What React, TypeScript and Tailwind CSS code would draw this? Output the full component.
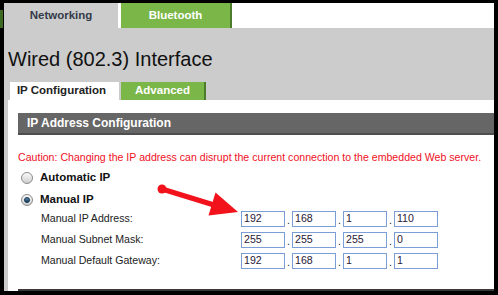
const font = "font-['Liberation_Sans',Arial,sans-serif]";

function Radio({ checked }: { checked?: boolean }) {
  return (
    <span className="flex h-[12px] w-[12px] items-center justify-center rounded-full border border-[#8a8a8a] bg-linear-to-b from-[#fafafa] to-[#cfcfcf]">
      {checked && (
        <span className="h-[6px] w-[6px] rounded-full border border-[#0f2f4a] bg-linear-to-b from-[#5d8fb8] to-[#173c5c]" />
      )}
    </span>
  );
}

function IpRow({ label, parts }: { label: string; parts: string[] }) {
  return (
    <div className="flex h-[21px] items-center">
      <div className="w-[223px] pl-[23px] text-[10.6px] text-[#222]">{label}</div>
      <div className="flex items-center">
        {parts.map((p, i) => (
          <div key={i} className="flex items-center">
            {i > 0 && <span className="w-[7px] pt-[4px] text-center text-[10.6px] leading-none text-[#222]">.</span>}
            <div className="flex h-[16px] w-[44px] items-center border border-[#7b9ed6] bg-white pl-[2px] text-[10.6px] text-[#2a1838]">
              {p}
            </div>
          </div>
        ))}
      </div>
    </div>
  );
}

export default function App() {
  return (
    <div className={`relative flex h-[295px] w-[498px] flex-col overflow-hidden bg-black pt-[3px] pr-[4px] pb-[4px] ${font}`}>
      {/* top tabs */}
      <div className="flex h-[25px] shrink-0">
        <div className="flex w-[4px] flex-col">
          <div className="h-[7px]" />
          <div className="h-[18px] w-[3px] bg-[#3d6a22]" />
        </div>
        <div className="flex w-[114px] items-center justify-center bg-[#cccccc] text-[11.5px] font-bold text-[#343a4a]">
          Networking
        </div>
        <div className="w-[3px] bg-white" />
        <div className="flex w-[111px]">
          <div className="flex flex-1 items-center justify-center bg-[#7ab648] text-[11.5px] font-bold text-white">
            Bluetooth
          </div>
          <div className="w-[2px] bg-[#4d7d2c]" />
        </div>
        <div className="flex-1 bg-white" />
      </div>

      {/* grey header panel */}
      <div className="ml-[4px] flex h-[72px] shrink-0 flex-col bg-[#cccccc]">
        <div className="mt-[20px] h-[23px] pl-[4px] text-[20px] leading-[23px] text-[#111]">Wired (802.3) Interface</div>
        <div className="mt-[11px] flex h-[18px] pl-[6px]">
          <div className="flex w-[109px] items-center justify-center bg-white pr-[6px] text-[11.5px] font-bold text-[#222]">
            IP Configuration
          </div>
          <div className="w-[2px]" />
          <div className="flex w-[85px]">
            <div className="flex flex-1 items-center justify-center bg-[#7ab648] text-[11.5px] font-bold text-white">
              Advanced
            </div>
            <div className="w-[2px] bg-[#4d7d2c]" />
          </div>
        </div>
      </div>

      {/* content */}
      <div className="ml-[4px] flex flex-1 border-l-[4px] border-[#cccccc] bg-white pl-[10px]">
        <div className="flex flex-1 flex-col border-b-2 border-[#3a3a3a]">
          <div className="mt-[13px] flex h-[22px] items-center border-b-2 border-[#4e4e4e] bg-[#666666] pl-[9px] text-[12px] font-bold text-white">
            IP Address Configuration
          </div>
          <div className="mt-[16px] h-[13px] text-[10.6px] leading-[13px] text-[#f0101e]">
            Caution: Changing the IP address can disrupt the current connection to the embedded Web server.
          </div>
          <div className="mt-[6px] flex h-[16px] items-center gap-[7px] pl-[3px]">
            <Radio />
            <span className="text-[11.5px] font-bold text-[#111]">Automatic IP</span>
          </div>
          <div className="mt-[6px] flex h-[16px] items-center gap-[7px] pl-[3px]">
            <Radio checked />
            <span className="text-[11.5px] font-bold text-[#111]">Manual IP</span>
          </div>
          <IpRow label="Manual IP Address:" parts={["192", "168", "1", "110"]} />
          <IpRow label="Manual Subnet Mask:" parts={["255", "255", "255", "0"]} />
          <IpRow label="Manual Default Gateway:" parts={["192", "168", "1", "1"]} />
        </div>
      </div>

      {/* red annotation arrow */}
      <svg className="pointer-events-none absolute left-0 top-0" width="498" height="295" viewBox="0 0 498 295">
        <circle cx="162" cy="189" r="4.5" fill="#f2121c" />
        <line x1="162" y1="189" x2="214" y2="205" stroke="#f2121c" strokeWidth="5" />
        <polygon points="238,212 215.5,192.5 208.5,215.5" fill="#f2121c" />
      </svg>
    </div>
  );
}
